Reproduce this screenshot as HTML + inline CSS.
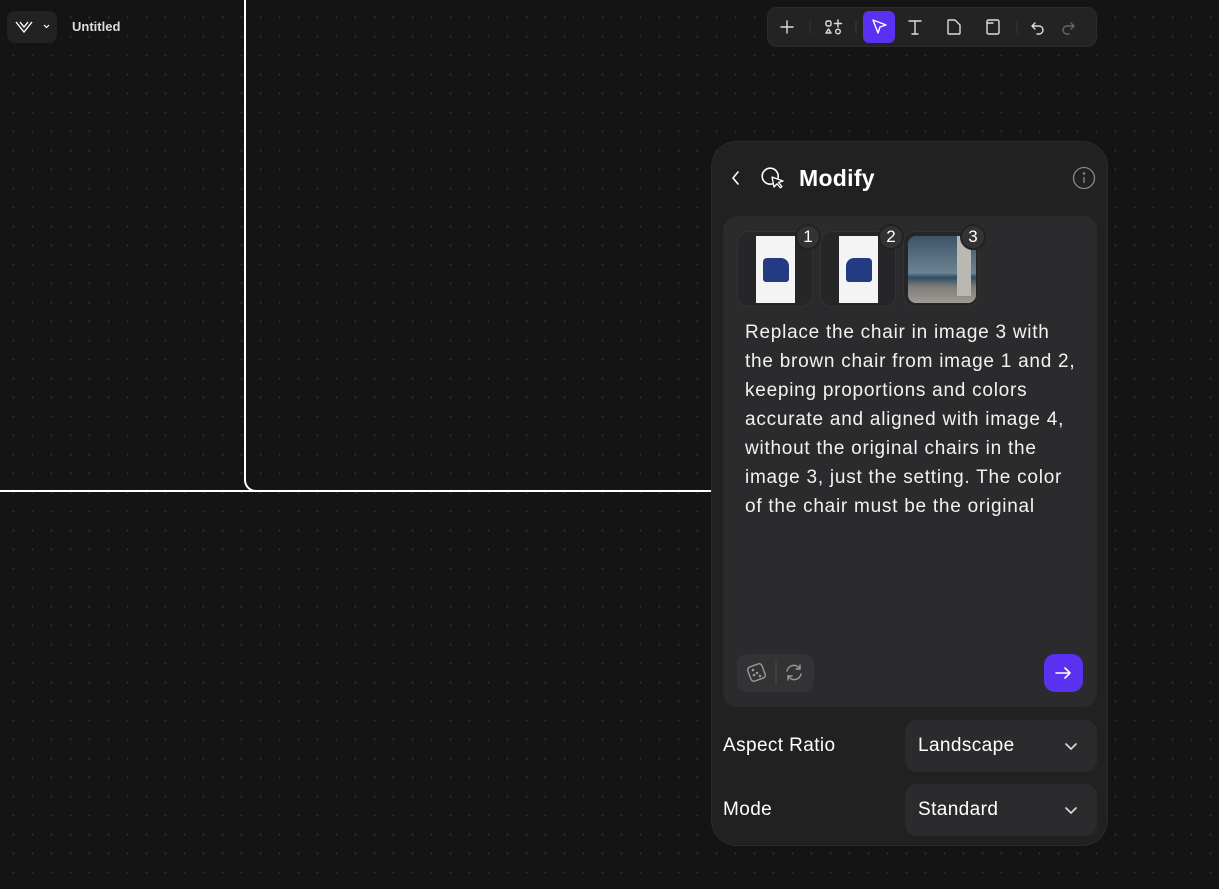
<!DOCTYPE html>
<html><head><style>
*{margin:0;padding:0;box-sizing:border-box}
body{width:1219px;height:889px;overflow:hidden;background:#141414;background-image:radial-gradient(circle,#2e2e2e 1px,transparent 1.3px);background-size:19px 19px;background-position:4px 8px;font-family:"Liberation Sans",sans-serif;color:#fff;position:relative}
.abs{position:absolute}
.panel{left:711px;top:141px;width:397px;height:705px;background:#212121;border-radius:26px;border:1px solid #2a2a2a}
.box{left:723px;top:216px;width:374px;height:491px;background:#2b2b2d;border-radius:14px}
.th{top:231px;width:76px;height:76px;border:1px solid #333;border-radius:12px;background:#262628}
.badge{width:26px;height:26px;border-radius:50%;background:#333;border:2px solid #222;font-size:17px;text-align:center;line-height:22px;color:#fff}
.txt{left:745px;top:318px;width:335px;font-size:19px;line-height:29px;color:#f2f2f2;letter-spacing:0.75px}
.dd{left:905px;width:192px;height:52px;background:#2b2b2d;border-radius:12px;font-size:19px;line-height:52px;padding-left:13px;letter-spacing:0.4px}
.lbl{left:723px;font-size:19px;letter-spacing:0.4px}
</style></head><body>
<div class="abs" style="left:0;top:490px;width:260px;height:2px;background:#fff"></div>
<div class="abs" style="left:244px;top:0;width:20px;height:492px;border-left:2px solid #fff;border-bottom:2px solid #fff;border-bottom-left-radius:12px"></div>
<div class="abs" style="left:262px;top:490px;width:449px;height:2px;background:#fff"></div>

<div class="abs" style="left:7px;top:11px;width:50px;height:32px;background:#222;border-radius:8px"></div>
<svg class="abs" style="left:15px;top:19px" width="38" height="16" viewBox="0 0 38 16" fill="none" stroke="#fff" stroke-width="1.4"><path d="M1 3l8 10 8-10M5 3l4 5 4-5"/><path d="M29 6l2.5 2.5L34 6" stroke-width="1.2"/></svg>
<div class="abs" style="left:72px;top:19px;font-size:13px;font-weight:bold;color:#ddd">Untitled</div>

<div class="abs" style="left:767px;top:7px;width:330px;height:40px;background:#232323;border-radius:10px;border:1px solid #2c2c2c"></div>
<svg class="abs" style="left:767px;top:7px" width="330" height="40" viewBox="0 0 330 40" fill="none" stroke="#ddd" stroke-width="1.4" stroke-linecap="round" stroke-linejoin="round">
<path d="M20 14v12M14 20h12"/>
<path d="M43 14v12" stroke="#3a3a3a" stroke-width="1"/>
<rect x="59" y="14" width="5" height="5" rx="1.5"/><path d="M71 13v7M67.5 16.5h7"/><path d="M61.5 22l2.5 4h-5z"/><circle cx="71" cy="24.5" r="2.3"/>
<path d="M89 14v12" stroke="#3a3a3a" stroke-width="1"/>
<rect x="96" y="4" width="32" height="32" rx="6" fill="#5a31f0" stroke="none"/>
<path d="M106 13l13 5-6 2-2 6z" stroke="#fff"/>
<path d="M142 14h12M148 14v13M145 27h6"/>
<path d="M182 13h6l5 5v8a1 1 0 0 1-1 1h-10a1 1 0 0 1-1-1V14a1 1 0 0 1 1-1z"/>
<rect x="220" y="13" width="12" height="14" rx="1.5"/><path d="M220 16h6"/>
<path d="M250 14v12" stroke="#3a3a3a" stroke-width="1"/>
<path d="M268 16l-3 3 3 3M265 19h7a4 4 0 0 1 0 8h-2"/>
<path d="M304 16l3 3-3 3M307 19h-7a4 4 0 0 0 0 8h2" stroke="#666"/>
</svg>

<div class="abs panel"></div>
<svg class="abs" style="left:728px;top:166px" width="70" height="26" viewBox="0 0 70 26" fill="none" stroke="#fff" stroke-width="1.6" stroke-linecap="round" stroke-linejoin="round">
<path d="M10 6l-5 6 5 6"/>
<path d="M44 18a8 8 0 1 1 6-6"/><path d="M44 11l11 4-4.5 1.5 3.5 4-1.5 1.3-3.5-4L46 21z" stroke-width="1.3"/>
</svg>
<div class="abs" style="left:799px;top:165px;font-size:23px;font-weight:bold;letter-spacing:0.3px">Modify</div>
<svg class="abs" style="left:1072px;top:166px" width="24" height="24" viewBox="0 0 24 24" fill="none" stroke="#888" stroke-width="1.3"><circle cx="12" cy="12" r="10.5"/><path d="M12 11v6"/><circle cx="12" cy="7.5" r="0.6" fill="#888"/></svg>

<div class="abs box"></div>
<div class="abs th" style="left:737px"><div class="abs" style="left:18px;top:4px;width:39px;height:67px;background:#f4f4f4"></div><div class="abs" style="left:25px;top:26px;width:26px;height:24px;background:#243a82;border-radius:4px 8px 3px 3px"></div></div>
<div class="abs th" style="left:820px"><div class="abs" style="left:18px;top:4px;width:39px;height:67px;background:#f4f4f4"></div><div class="abs" style="left:25px;top:26px;width:26px;height:24px;background:#243a82;border-radius:8px 4px 3px 3px"></div></div>
<div class="abs th" style="left:903px"><div class="abs" style="left:4px;top:4px;width:68px;height:67px;border-radius:8px;background:linear-gradient(180deg,#3c5468 0%,#6d8393 55%,#2d4e66 62%,#7d7b78 75%,#a09c96 100%)"></div><div class="abs" style="left:53px;top:4px;width:14px;height:60px;background:#b9b8b3"></div></div>
<div class="abs badge" style="left:795px;top:224px">1</div>
<div class="abs badge" style="left:878px;top:224px">2</div>
<div class="abs badge" style="left:960px;top:224px">3</div>

<div class="abs txt">Replace the chair in image 3 with the brown chair from image 1 and 2, keeping proportions and colors accurate and aligned with image 4, without the original chairs in the image 3, just the setting. The color of the chair must be the original</div>

<div class="abs" style="left:737px;top:654px;width:77px;height:38px;background:#333335;border-radius:10px"></div>
<svg class="abs" style="left:737px;top:654px" width="77" height="38" viewBox="0 0 77 38" fill="none" stroke="#999" stroke-width="1.4" stroke-linecap="round">
<rect x="12" y="11" width="15" height="15" rx="3" transform="rotate(-20 19.5 18.5)"/><circle cx="16" cy="16" r=".6" fill="#999"/><circle cx="20" cy="19" r=".6" fill="#999"/><circle cx="23" cy="22" r=".6" fill="#999"/><circle cx="17" cy="21" r=".6" fill="#999"/>
<path d="M39 8v22" stroke="#444"/>
<path d="M50 17a7 7 0 0 1 13-2M64 20a7 7 0 0 1-13 2M63 11v4h-4M51 26v-4h4"/>
</svg>
<div class="abs" style="left:1044px;top:654px;width:39px;height:38px;background:#5a31f0;border-radius:11px"></div>
<svg class="abs" style="left:1044px;top:654px" width="39" height="38" viewBox="0 0 39 38" fill="none" stroke="#fff" stroke-width="1.6" stroke-linecap="round" stroke-linejoin="round"><path d="M12 19h14M21 14l5 5-5 5"/></svg>

<div class="abs lbl" style="top:735px">Aspect Ratio</div>
<div class="abs dd" style="top:720px">Landscape</div>
<div class="abs lbl" style="top:799px">Mode</div>
<div class="abs dd" style="top:784px">Standard</div>
<svg class="abs" style="left:1063px;top:738px" width="16" height="16" viewBox="0 0 16 16" fill="none" stroke="#ddd" stroke-width="1.6" stroke-linecap="round"><path d="M3 6l5 5 5-5"/></svg>
<svg class="abs" style="left:1063px;top:802px" width="16" height="16" viewBox="0 0 16 16" fill="none" stroke="#ddd" stroke-width="1.6" stroke-linecap="round"><path d="M3 6l5 5 5-5"/></svg>
</body></html>
